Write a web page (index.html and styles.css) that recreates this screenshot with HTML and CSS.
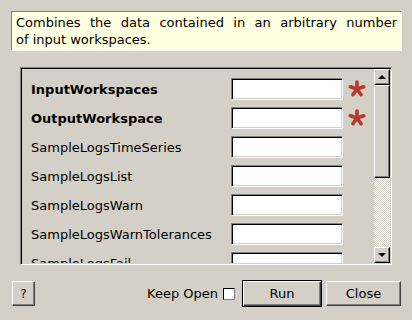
FILE: index.html
```html
<!DOCTYPE html>
<html lang="en">
<head>
  <meta charset="UTF-8">
  <title>MergeRuns</title>
  <link rel="stylesheet" href="styles.css">
</head>
<body>
  <div class="dialog">
    <div class="info"><span class="first">Combines the data contained in an arbitrary number</span>of input workspaces.</div>

    <div class="frame">
      <div class="props">
        <div class="row">
          <span class="label bold">InputWorkspaces</span>
          <span class="field"></span>
          <svg class="req" width="18" height="18" viewBox="0 0 18 18"><g stroke="#b83a2e" stroke-width="3.6" stroke-linecap="round"><line x1="9" y1="9" x2="9" y2="2"/><line x1="9" y1="9" x2="15.7" y2="6.8"/><line x1="9" y1="9" x2="13.1" y2="14.7"/><line x1="9" y1="9" x2="4.9" y2="14.7"/><line x1="9" y1="9" x2="2.3" y2="6.8"/></g></svg>
        </div>
        <div class="row">
          <span class="label bold">OutputWorkspace</span>
          <span class="field"></span>
          <svg class="req" width="18" height="18" viewBox="0 0 18 18"><g stroke="#b83a2e" stroke-width="3.6" stroke-linecap="round"><line x1="9" y1="9" x2="9" y2="2"/><line x1="9" y1="9" x2="15.7" y2="6.8"/><line x1="9" y1="9" x2="13.1" y2="14.7"/><line x1="9" y1="9" x2="4.9" y2="14.7"/><line x1="9" y1="9" x2="2.3" y2="6.8"/></g></svg>
        </div>
        <div class="row">
          <span class="label">SampleLogsTimeSeries</span>
          <span class="field"></span>
        </div>
        <div class="row">
          <span class="label">SampleLogsList</span>
          <span class="field"></span>
        </div>
        <div class="row">
          <span class="label">SampleLogsWarn</span>
          <span class="field"></span>
        </div>
        <div class="row">
          <span class="label">SampleLogsWarnTolerances</span>
          <span class="field"></span>
        </div>
        <div class="row">
          <span class="label">SampleLogsFail</span>
          <span class="field"></span>
        </div>
      </div>

      <div class="scrollbar">
        <div class="sb-btn"><span class="arrow up"></span></div>
        <div class="sb-thumb"></div>
        <div class="sb-track"></div>
        <div class="sb-btn"><span class="arrow down"></span></div>
      </div>
    </div>

    <div class="buttons">
      <button class="btn help">?</button>
      <span class="spacer"></span>
      <label class="keep">Keep Open <span class="check"></span></label>
      <button class="btn run">Run</button>
      <button class="btn close">Close</button>
    </div>
  </div>
</body>
</html>
```

FILE: styles.css
```css
body {
  margin: 0;
  background: #d4d0c8;
  color: #000;
  font-family: "DejaVu Sans", sans-serif;
  font-size: 13px;
}

.dialog {
  padding: 11px 11px 0 11px;
}

.info {
  width: 381px;
  background: #ffffe1;
  border: 1px solid;
  border-color: #808080 #fff #fff #808080;
  padding: 2px 4px 2px 4px;
  line-height: 17px;
}

.info .first {
  display: block;
  text-align: justify;
  text-align-last: justify;
}

.frame {
  display: flex;
  width: 368px;
  height: 194px;
  margin: 16px 0 0 9px;
  border: 1px solid;
  border-color: #808080 #fff #fff #808080;
  box-shadow: inset 1px 1px #000, inset -1px -1px #d4d0c8;
  padding: 1px;
  overflow: hidden;
}

.props {
  flex: 1;
  display: flex;
  flex-direction: column;
  gap: 7px;
  padding: 9px 0 0 9px;
  overflow: hidden;
}

.row {
  display: flex;
  align-items: center;
  height: 22px;
  flex-shrink: 0;
}

.label {
  width: 200px;
  white-space: nowrap;
  overflow: hidden;
}

.bold {
  font-weight: bold;
}

.field {
  width: 108px;
  height: 18px;
  background: #fff;
  border: 1px solid;
  border-color: #808080 #fff #fff #808080;
  box-shadow: inset 1px 1px #000, inset -1px -1px #d4d0c8;
  padding: 1px;
}

.req {
  margin-left: 5px;
}

.scrollbar {
  width: 16px;
  display: flex;
  flex-direction: column;
}

.sb-btn, .sb-thumb {
  box-sizing: border-box;
  background: #d4d0c8;
  border: 1px solid;
  border-color: #fff #000 #000 #fff;
  box-shadow: inset -1px -1px #808080;
}

.sb-btn {
  height: 16px;
  display: flex;
  align-items: center;
  justify-content: center;
}

.sb-thumb {
  height: 93px;
}

.sb-track {
  flex: 1;
  background: repeating-conic-gradient(#fff 0 25%, #d4d0c8 0 50%) 0 0 / 2px 2px;
}

.arrow {
  width: 0;
  height: 0;
  border-left: 4px solid transparent;
  border-right: 4px solid transparent;
}

.arrow.up {
  border-bottom: 4px solid #000;
}

.arrow.down {
  border-top: 4px solid #000;
}

.buttons {
  display: flex;
  align-items: center;
  margin-top: 15px;
  padding-left: 1px;
}

.spacer {
  flex: 1;
}

.btn {
  font-family: "DejaVu Sans", sans-serif;
  font-size: 13px;
  color: #000;
  background: #d4d0c8;
  border: 1px solid;
  border-color: #fff #404040 #404040 #fff;
  box-shadow: inset -1px -1px #808080;
  height: 25px;
  padding: 0;
}

.help {
  width: 23px;
  font-size: 12px;
}

.keep {
  display: flex;
  align-items: center;
  gap: 5px;
  margin-right: 7px;
}

.check {
  width: 10px;
  height: 10px;
  background: #fff;
  border: 1px solid;
  border-color: #000 #808080 #808080 #000;
}

.run {
  width: 80px;
  height: 27px;
  border-color: #000;
  box-shadow: inset 1px 1px #fff, inset -1px -1px #404040, inset -2px -2px #808080;
}

.close {
  width: 75px;
  margin-left: 4px;
}
```
